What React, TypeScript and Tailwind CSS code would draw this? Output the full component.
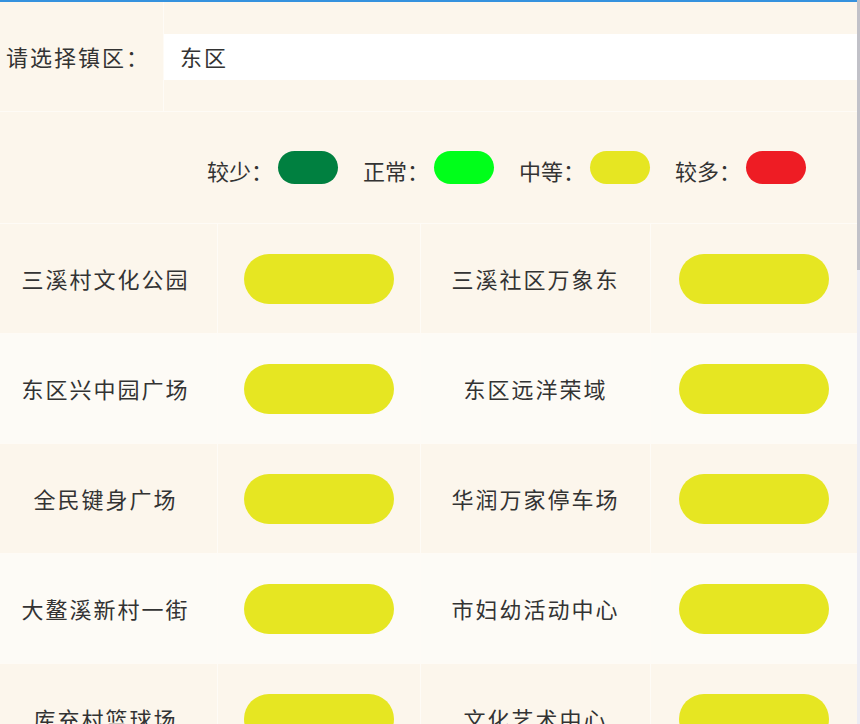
const FONT = { fontFamily: '"Noto Sans CJK SC", "Noto Sans", sans-serif' };

const LEGEND = [
  { label: "较少：", color: "bg-[#008040]" },
  { label: "正常：", color: "bg-[#00ff1a]" },
  { label: "中等：", color: "bg-[#e6e622]" },
  { label: "较多：", color: "bg-[#ee1c24]" },
];

const PLACES: [string, string][] = [
  ["三溪村文化公园", "三溪社区万象东"],
  ["东区兴中园广场", "东区远洋荣域"],
  ["全民键身广场", "华润万家停车场"],
  ["大鳌溪新村一街", "市妇幼活动中心"],
  ["库充村篮球场", "文化艺术中心"],
];

function Pill() {
  return <div className="w-[150px] h-[50px] rounded-full bg-[#e6e622]" />;
}

export default function App() {
  return (
    <div className="w-[860px] h-[724px] overflow-hidden flex bg-[#fcf6ec] text-[#333]" style={FONT}>
      <div className="w-[857px] flex flex-col border-t-2 border-[#3592de]">
        {/* town picker */}
        <div className="flex h-[110px] shrink-0 border-b border-[#fefbf6]">
          <div className="w-[164px] shrink-0 flex items-center pl-[6px] border-r border-[#fefbf6] text-[22px] tracking-[2px]">
            请选择镇区：
          </div>
          <div className="flex-1 flex items-center">
            <div className="w-full h-[46px] bg-white flex items-center pl-[16px] text-[22px] tracking-[2px]">
              东区
            </div>
          </div>
        </div>

        {/* legend */}
        <div className="h-[112px] shrink-0 flex items-center justify-end pr-[51px] gap-[25px] border-b border-[#fefbf6]">
          {LEGEND.map((l) => (
            <div key={l.label} className="flex items-center">
              <span className="text-[22px] leading-none pt-[4px]">{l.label}</span>
              <div className={`w-[60px] h-[33px] rounded-full ml-[5px] ${l.color}`} />
            </div>
          ))}
        </div>

        {/* places */}
        {PLACES.map(([a, b], i) => (
          <div
            key={a}
            className={`grid grid-cols-[218px_203px_230px_206px] h-[110px] shrink-0 border-b border-[#fefbf6] ${
              i % 2 === 1 ? "bg-[#fdfbf6]" : "bg-[#fcf6ec]"
            }`}
          >
            <div className="flex items-center justify-center pr-[6px] border-r border-[#fefbf6] text-[22px] tracking-[2px]">
              {a}
            </div>
            <div className="flex items-center justify-center border-r border-[#fefbf6]">
              <Pill />
            </div>
            <div className="flex items-center justify-center border-r border-[#fefbf6] text-[22px] tracking-[2px]">
              {b}
            </div>
            <div className="flex items-center justify-center">
              <Pill />
            </div>
          </div>
        ))}
      </div>

      {/* scrollbar */}
      <div className="w-[3px] h-full bg-[#ececf4] flex flex-col">
        <div className="h-[270px] bg-[#c1c1c8]" />
      </div>
    </div>
  );
}
